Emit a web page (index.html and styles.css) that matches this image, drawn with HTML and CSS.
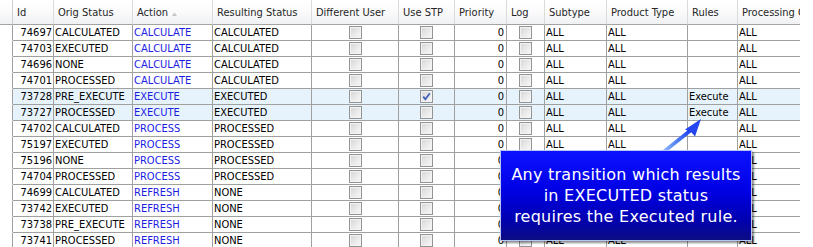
FILE: index.html
```html
<!DOCTYPE html>
<html>
<head>
<meta charset="utf-8">
<link rel="stylesheet" href="styles.css">
</head>
<body>
<div class="grid">
  <div class="row head">
    <div class="h w0"></div>
    <div class="h wid">Id</div>
    <div class="h worig">Orig Status</div>
    <div class="h wact">Action<svg class="sort" width="5" height="4" viewBox="0 0 5 4"><path d="M0 4 L2.5 0.5 L5 4 Z" fill="#c4c4c4"/></svg></div>
    <div class="h wres">Resulting Status</div>
    <div class="h wdiff">Different User</div>
    <div class="h wstp">Use STP</div>
    <div class="h wpri">Priority</div>
    <div class="h wlog">Log</div>
    <div class="h wsub">Subtype</div>
    <div class="h wprod">Product Type</div>
    <div class="h wrul">Rules</div>
    <div class="h wproc">Processing Org</div>
  </div>

  <div class="row"><div class="c w0 blank"></div><div class="c wid num">74697</div><div class="c worig">CALCULATED</div><div class="c wact act">CALCULATE</div><div class="c wres">CALCULATED</div><div class="c wdiff chk"><span class="cb"></span></div><div class="c wstp chk"><span class="cb"></span></div><div class="c wpri num">0</div><div class="c wlog chk"><span class="cb"></span></div><div class="c wsub">ALL</div><div class="c wprod">ALL</div><div class="c wrul"></div><div class="c wproc">ALL</div></div>
  <div class="row"><div class="c w0 blank"></div><div class="c wid num">74703</div><div class="c worig">EXECUTED</div><div class="c wact act">CALCULATE</div><div class="c wres">CALCULATED</div><div class="c wdiff chk"><span class="cb"></span></div><div class="c wstp chk"><span class="cb"></span></div><div class="c wpri num">0</div><div class="c wlog chk"><span class="cb"></span></div><div class="c wsub">ALL</div><div class="c wprod">ALL</div><div class="c wrul"></div><div class="c wproc">ALL</div></div>
  <div class="row"><div class="c w0 blank"></div><div class="c wid num">74696</div><div class="c worig">NONE</div><div class="c wact act">CALCULATE</div><div class="c wres">CALCULATED</div><div class="c wdiff chk"><span class="cb"></span></div><div class="c wstp chk"><span class="cb"></span></div><div class="c wpri num">0</div><div class="c wlog chk"><span class="cb"></span></div><div class="c wsub">ALL</div><div class="c wprod">ALL</div><div class="c wrul"></div><div class="c wproc">ALL</div></div>
  <div class="row"><div class="c w0 blank"></div><div class="c wid num">74701</div><div class="c worig">PROCESSED</div><div class="c wact act">CALCULATE</div><div class="c wres">CALCULATED</div><div class="c wdiff chk"><span class="cb"></span></div><div class="c wstp chk"><span class="cb"></span></div><div class="c wpri num">0</div><div class="c wlog chk"><span class="cb"></span></div><div class="c wsub">ALL</div><div class="c wprod">ALL</div><div class="c wrul"></div><div class="c wproc">ALL</div></div>
  <div class="row sel"><div class="c w0 blank"></div><div class="c wid num">73728</div><div class="c worig">PRE_EXECUTE</div><div class="c wact act">EXECUTE</div><div class="c wres">EXECUTED</div><div class="c wdiff chk"><span class="cb"></span></div><div class="c wstp chk"><span class="cb on"><svg width="11" height="11" viewBox="0 0 11 11"><path d="M2.2 5.6 L4.4 8.2 L8.8 2.2" fill="none" stroke="#3f62b8" stroke-width="1.8"/></svg></span></div><div class="c wpri num">0</div><div class="c wlog chk"><span class="cb"></span></div><div class="c wsub">ALL</div><div class="c wprod">ALL</div><div class="c wrul">Execute</div><div class="c wproc">ALL</div></div>
  <div class="row sel"><div class="c w0 blank"></div><div class="c wid num">73727</div><div class="c worig">PROCESSED</div><div class="c wact act">EXECUTE</div><div class="c wres">EXECUTED</div><div class="c wdiff chk"><span class="cb"></span></div><div class="c wstp chk"><span class="cb"></span></div><div class="c wpri num">0</div><div class="c wlog chk"><span class="cb"></span></div><div class="c wsub">ALL</div><div class="c wprod">ALL</div><div class="c wrul">Execute</div><div class="c wproc">ALL</div></div>
  <div class="row"><div class="c w0 blank"></div><div class="c wid num">74702</div><div class="c worig">CALCULATED</div><div class="c wact act">PROCESS</div><div class="c wres">PROCESSED</div><div class="c wdiff chk"><span class="cb"></span></div><div class="c wstp chk"><span class="cb"></span></div><div class="c wpri num">0</div><div class="c wlog chk"><span class="cb"></span></div><div class="c wsub">ALL</div><div class="c wprod">ALL</div><div class="c wrul"></div><div class="c wproc">ALL</div></div>
  <div class="row"><div class="c w0 blank"></div><div class="c wid num">75197</div><div class="c worig">EXECUTED</div><div class="c wact act">PROCESS</div><div class="c wres">PROCESSED</div><div class="c wdiff chk"><span class="cb"></span></div><div class="c wstp chk"><span class="cb"></span></div><div class="c wpri num">0</div><div class="c wlog chk"><span class="cb"></span></div><div class="c wsub">ALL</div><div class="c wprod">ALL</div><div class="c wrul"></div><div class="c wproc">ALL</div></div>
  <div class="row"><div class="c w0 blank"></div><div class="c wid num">75196</div><div class="c worig">NONE</div><div class="c wact act">PROCESS</div><div class="c wres">PROCESSED</div><div class="c wdiff chk"><span class="cb"></span></div><div class="c wstp chk"><span class="cb"></span></div><div class="c wpri num">0</div><div class="c wlog chk"><span class="cb"></span></div><div class="c wsub">ALL</div><div class="c wprod">ALL</div><div class="c wrul"></div><div class="c wproc">ALL</div></div>
  <div class="row"><div class="c w0 blank"></div><div class="c wid num">74704</div><div class="c worig">PROCESSED</div><div class="c wact act">PROCESS</div><div class="c wres">PROCESSED</div><div class="c wdiff chk"><span class="cb"></span></div><div class="c wstp chk"><span class="cb"></span></div><div class="c wpri num">0</div><div class="c wlog chk"><span class="cb"></span></div><div class="c wsub">ALL</div><div class="c wprod">ALL</div><div class="c wrul"></div><div class="c wproc">ALL</div></div>
  <div class="row"><div class="c w0 blank"></div><div class="c wid num">74699</div><div class="c worig">CALCULATED</div><div class="c wact act">REFRESH</div><div class="c wres">NONE</div><div class="c wdiff chk"><span class="cb"></span></div><div class="c wstp chk"><span class="cb"></span></div><div class="c wpri num">0</div><div class="c wlog chk"><span class="cb"></span></div><div class="c wsub">ALL</div><div class="c wprod">ALL</div><div class="c wrul"></div><div class="c wproc">ALL</div></div>
  <div class="row"><div class="c w0 blank"></div><div class="c wid num">73742</div><div class="c worig">EXECUTED</div><div class="c wact act">REFRESH</div><div class="c wres">NONE</div><div class="c wdiff chk"><span class="cb"></span></div><div class="c wstp chk"><span class="cb"></span></div><div class="c wpri num">0</div><div class="c wlog chk"><span class="cb"></span></div><div class="c wsub">ALL</div><div class="c wprod">ALL</div><div class="c wrul"></div><div class="c wproc">ALL</div></div>
  <div class="row"><div class="c w0 blank"></div><div class="c wid num">73738</div><div class="c worig">PRE_EXECUTE</div><div class="c wact act">REFRESH</div><div class="c wres">NONE</div><div class="c wdiff chk"><span class="cb"></span></div><div class="c wstp chk"><span class="cb"></span></div><div class="c wpri num">0</div><div class="c wlog chk"><span class="cb"></span></div><div class="c wsub">ALL</div><div class="c wprod">ALL</div><div class="c wrul"></div><div class="c wproc">ALL</div></div>
  <div class="row"><div class="c w0 blank"></div><div class="c wid num">73741</div><div class="c worig">PROCESSED</div><div class="c wact act">REFRESH</div><div class="c wres">NONE</div><div class="c wdiff chk"><span class="cb"></span></div><div class="c wstp chk"><span class="cb"></span></div><div class="c wpri num">0</div><div class="c wlog chk"><span class="cb"></span></div><div class="c wsub">ALL</div><div class="c wprod">ALL</div><div class="c wrul"></div><div class="c wproc">ALL</div></div>

  <svg class="arrow" width="60" height="50" viewBox="0 0 60 50">
    <defs>
      <linearGradient id="ag" x1="0" y1="1" x2="1" y2="0">
        <stop offset="0" stop-color="#9cc2fb"/>
        <stop offset="0.55" stop-color="#4f7ef2"/>
        <stop offset="1" stop-color="#1a3cf0"/>
      </linearGradient>
    </defs>
    <path d="M6 44 L36 20" stroke="url(#ag)" stroke-width="3.6" fill="none" stroke-linecap="round"/>
    <path d="M46 9 L40 26.5 L36.5 22.5 L30 19.5 Z" fill="#2445f0"/>
  </svg>

  <div class="callout">Any transition which results<br>in EXECUTED status<br>requires the Executed rule.</div>
</div>
</body>
</html>
```

FILE: styles.css
```css
html, body {
  margin: 0;
  padding: 0;
  background: #ffffff;
}

.grid {
  position: relative;
  width: 800px;
  height: 247px;
  overflow: hidden;
  background: #ffffff;
}

.row {
  display: flex;
  flex-wrap: nowrap;
  width: 820px;
}

.h, .c {
  box-sizing: border-box;
  flex: none;
  display: flex;
  align-items: center;
  white-space: nowrap;
  overflow: hidden;
  font-family: "DejaVu Sans Condensed", "DejaVu Sans", sans-serif;
  font-stretch: condensed;
  font-size: 11px;
}

.head {
  background: linear-gradient(#ffffff 0%, #fbfbfc 45%, #eff0f2 100%);
}

.h {
  height: 25px;
  padding-left: 4px;
  padding-top: 1px;
  color: #262626;
  border-right: 1px solid #dadbdd;
  border-bottom: 1px solid #a3a3a3;
}

.h.w0 {
  border-right: 1px solid #cfcfcf;
}

.sort {
  margin-left: 4px;
  margin-top: 2px;
}

.c {
  height: 16px;
  padding: 0 1px;
  color: #000000;
  border-right: 1px solid #a0a0a0;
  border-bottom: 1px solid #a0a0a0;
  line-height: 15px;
}

.c.blank {
  border-bottom-color: transparent;
  background: #ffffff;
}

.sel .c {
  background: #e6f3fc;
}

.sel .c.blank {
  background: #ffffff;
}

.num {
  justify-content: flex-end;
}

.wid { padding-right: 1px; }
.wpri { padding-right: 2px; }

.act {
  color: #1d1de0;
}

.chk {
  justify-content: center;
}

.cb {
  box-sizing: border-box;
  width: 13px;
  height: 13px;
  border: 1px solid #939494;
  background: linear-gradient(135deg, #d4d4d4 0%, #ececec 60%, #f8f8f8 100%);
  box-shadow: inset 0 0 0 1px #f3f3f3;
  display: flex;
  align-items: center;
  justify-content: center;
}

.cb svg {
  display: block;
}

.w0 { width: 13px; }
.wid { width: 41px; }
.worig { width: 79px; }
.wact { width: 80px; }
.wres { width: 99px; }
.wdiff { width: 87px; }
.wstp { width: 56px; }
.wpri { width: 52px; }
.wlog { width: 38px; }
.wsub { width: 62px; }
.wprod { width: 81px; }
.wrul { width: 50px; }
.wproc { width: 80px; }

.arrow {
  position: absolute;
  left: 655px;
  top: 110px;
}

.callout {
  position: absolute;
  left: 500px;
  top: 150px;
  width: 252px;
  height: 91px;
  box-sizing: border-box;
  border: 1px solid #b3c5f0;
  background: linear-gradient(#0c12ff 0%, #0000e4 45%, #0000b4 75%, #0c0c84 100%);
  box-shadow: 2px 2px 2px rgba(0, 0, 0, 0.45);
  color: #ffffff;
  display: flex;
  align-items: center;
  justify-content: center;
  text-align: center;
  font-family: "DejaVu Sans", sans-serif;
  font-size: 16px;
  line-height: 21px;
  letter-spacing: 0.25px;
}
```
